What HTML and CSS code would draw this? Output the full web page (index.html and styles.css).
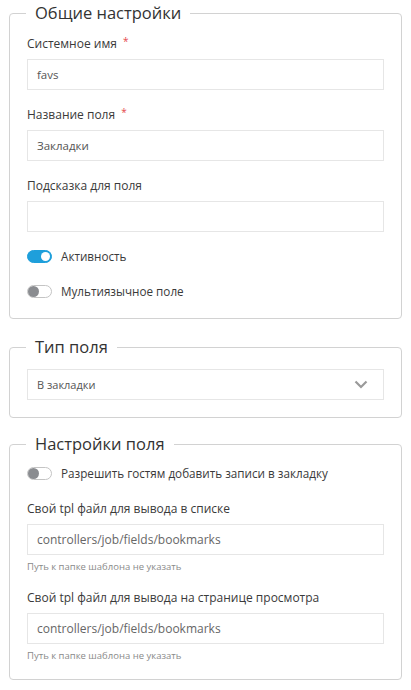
FILE: index.html
```html
<!DOCTYPE html>
<html lang="ru">
<head>
<meta charset="utf-8">
<title>Настройки поля</title>
<link rel="stylesheet" href="styles.css">
</head>
<body>
<fieldset class="panel panel-general">
  <legend class="panel-title">Общие настройки</legend>
  <div class="field">
    <label class="field-label">Системное имя <span class="req">*</span></label>
    <div class="input">favs</div>
  </div>
  <div class="field">
    <label class="field-label">Название поля <span class="req">*</span></label>
    <div class="input">Закладки</div>
  </div>
  <div class="field">
    <label class="field-label">Подсказка для поля</label>
    <div class="input"></div>
  </div>
  <div class="toggles">
    <div class="toggle-row"><span class="toggle on"></span><span class="toggle-text">Активность</span></div>
    <div class="toggle-row"><span class="toggle"></span><span class="toggle-text">Мультиязычное поле</span></div>
  </div>
</fieldset>

<fieldset class="panel panel-type">
  <legend class="panel-title">Тип поля</legend>
  <div class="input select">
    <span class="select-text">В закладки</span>
    <svg class="chevron" width="14" height="9" viewBox="0 0 14 9"><polyline points="1.5,1.5 7,7 12.5,1.5" fill="none" stroke="#9a9a9a" stroke-width="2.2"/></svg>
  </div>
</fieldset>

<fieldset class="panel panel-options">
  <legend class="panel-title">Настройки поля</legend>
  <div class="toggle-row first"><span class="toggle"></span><span class="toggle-text">Разрешить гостям добавить записи в закладку</span></div>
  <div class="field tpl">
    <label class="field-label">Свой tpl файл для вывода в списке</label>
    <div class="input big">controllers/job/fields/bookmarks</div>
    <div class="hint">Путь к папке шаблона не указать</div>
  </div>
  <div class="field tpl">
    <label class="field-label">Свой tpl файл для вывода на странице просмотра</label>
    <div class="input big">controllers/job/fields/bookmarks</div>
    <div class="hint">Путь к папке шаблона не указать</div>
  </div>
</fieldset>
</body>
</html>
```

FILE: styles.css
```css
html, body {
  margin: 0;
  background: #ffffff;
}
body {
  padding: 0 9px;
  font-family: "Open Sans", "Liberation Sans", sans-serif;
  color: #3d3d3d;
  font-size: 12px;
}
.panel {
  margin: 0 0 13px;
  padding: 9px 17px 17px;
  border: 1px solid #d2d2d2;
  border-radius: 4px;
  min-width: 0;
}
.panel-general {
  margin-bottom: 15px;
  padding-bottom: 19px;
}
.panel-options {
  padding-bottom: 16px;
}
.panel-title {
  font-size: 16.5px;
  line-height: 26px;
  padding: 0 9px;
  margin-left: -1px;
  color: #333;
}
.field {
  display: flex;
  flex-direction: column;
}
.field + .field {
  margin-top: 16px;
}
.field-label {
  display: block;
  height: 18px;
  line-height: 18px;
  margin-bottom: 6px;
  color: #3a3a3a;
}
.req {
  color: #e5484d;
  font-size: 10px;
  line-height: 0;
  position: relative;
  top: -3px;
  margin-left: 3px;
}
.input {
  box-sizing: border-box;
  height: 31px;
  border: 1px solid #e6e6e6;
  padding: 0 9px;
  display: flex;
  align-items: center;
  color: #555;
  font-size: 11.5px;
}
.input.big {
  font-size: 12px;
  color: #666;
}
.select {
  justify-content: space-between;
  padding-right: 15px;
}
.select-text {
  font-size: 11px;
}
.toggles {
  margin-top: 16px;
  display: flex;
  flex-direction: column;
  gap: 19px;
}
.toggle-row {
  display: flex;
  align-items: center;
  height: 16px;
  gap: 9px;
}
.toggle-row.first {
  margin-top: -1px;
  margin-bottom: 19px;
}
.toggle {
  box-sizing: border-box;
  width: 25px;
  height: 13px;
  border-radius: 7px;
  border: 1px solid #c4c4c4;
  background: #fff;
  position: relative;
  flex: none;
}
.toggle::after {
  content: "";
  position: absolute;
  top: 0;
  left: 0;
  width: 11px;
  height: 11px;
  border-radius: 50%;
  background: #8a8c90;
}
.toggle.on {
  background: #1e9fdb;
  border-color: #1e9fdb;
}
.toggle.on::after {
  left: auto;
  right: 1px;
  top: 1px;
  width: 9px;
  height: 9px;
  background: #fff;
}
.toggle-text {
  color: #3a3a3a;
  font-size: 11.7px;
}
.field.tpl + .field.tpl {
  margin-top: 15px;
}
.hint {
  margin-top: 5px;
  font-size: 9.5px;
  line-height: 14px;
  color: #8a8a8a;
}
```
